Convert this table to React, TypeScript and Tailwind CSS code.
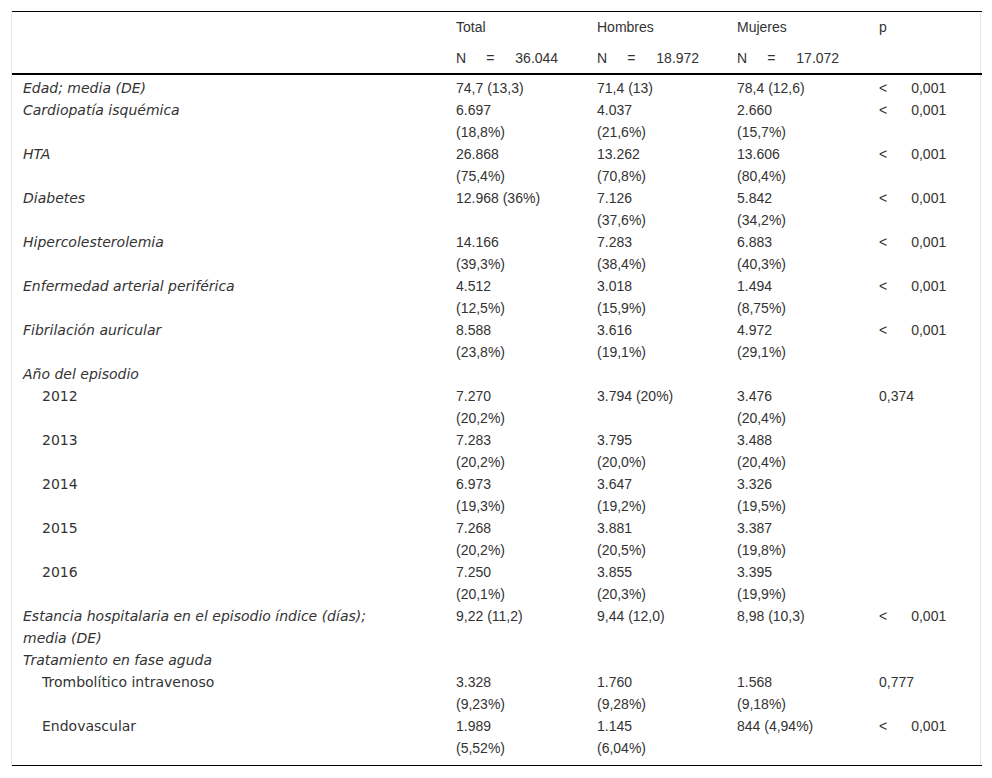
type Row = {
  label: string
  sub?: boolean
  total?: string
  hombres?: string
  mujeres?: string
  p?: string
  pLess?: boolean
}

const rows: Row[] = [
  { label: 'Edad; media (DE)', total: '74,7 (13,3)', hombres: '71,4 (13)', mujeres: '78,4 (12,6)', p: '0,001', pLess: true },
  { label: 'Cardiopatía isquémica', total: '6.697 (18,8%)', hombres: '4.037 (21,6%)', mujeres: '2.660 (15,7%)', p: '0,001', pLess: true },
  { label: 'HTA', total: '26.868 (75,4%)', hombres: '13.262 (70,8%)', mujeres: '13.606 (80,4%)', p: '0,001', pLess: true },
  { label: 'Diabetes', total: '12.968 (36%)', hombres: '7.126 (37,6%)', mujeres: '5.842 (34,2%)', p: '0,001', pLess: true },
  { label: 'Hipercolesterolemia', total: '14.166 (39,3%)', hombres: '7.283 (38,4%)', mujeres: '6.883 (40,3%)', p: '0,001', pLess: true },
  { label: 'Enfermedad arterial periférica', total: '4.512 (12,5%)', hombres: '3.018 (15,9%)', mujeres: '1.494 (8,75%)', p: '0,001', pLess: true },
  { label: 'Fibrilación auricular', total: '8.588 (23,8%)', hombres: '3.616 (19,1%)', mujeres: '4.972 (29,1%)', p: '0,001', pLess: true },
  { label: 'Año del episodio' },
  { label: '2012', sub: true, total: '7.270 (20,2%)', hombres: '3.794 (20%)', mujeres: '3.476 (20,4%)', p: '0,374' },
  { label: '2013', sub: true, total: '7.283 (20,2%)', hombres: '3.795 (20,0%)', mujeres: '3.488 (20,4%)' },
  { label: '2014', sub: true, total: '6.973 (19,3%)', hombres: '3.647 (19,2%)', mujeres: '3.326 (19,5%)' },
  { label: '2015', sub: true, total: '7.268 (20,2%)', hombres: '3.881 (20,5%)', mujeres: '3.387 (19,8%)' },
  { label: '2016', sub: true, total: '7.250 (20,1%)', hombres: '3.855 (20,3%)', mujeres: '3.395 (19,9%)' },
  { label: 'Estancia hospitalaria en el episodio índice (días); media (DE)', total: '9,22 (11,2)', hombres: '9,44 (12,0)', mujeres: '8,98 (10,3)', p: '0,001', pLess: true },
  { label: 'Tratamiento en fase aguda' },
  { label: 'Trombolítico intravenoso', sub: true, total: '3.328 (9,23%)', hombres: '1.760 (9,28%)', mujeres: '1.568 (9,18%)', p: '0,777' },
  { label: 'Endovascular', sub: true, total: '1.989 (5,52%)', hombres: '1.145 (6,04%)', mujeres: '844 (4,94%)', p: '0,001', pLess: true },
]

const labelFont = { fontFamily: '"DejaVu Sans", Verdana, sans-serif' }

function NCell({ n }: { n: string }) {
  return (
    <span className="whitespace-nowrap">
      N<span className="ml-[20px]">=</span>
      <span className="ml-[21px]">{n}</span>
    </span>
  )
}

function Num({ value }: { value?: string }) {
  return <div className="w-[86px]">{value}</div>
}

export default function App() {
  const last = rows.length - 1
  return (
    <div
      className="bg-white p-[11px] text-[14px] leading-[22px] text-[#333]"
      style={{ fontFamily: '"Liberation Sans", Arial, sans-serif' }}
    >
      <div className="border-x border-[#e8e8e8]">
        <table className="w-full table-fixed border-collapse border-y border-black">
          <colgroup>
            <col className="w-[433px]" />
            <col className="w-[141px]" />
            <col className="w-[140px]" />
            <col className="w-[142px]" />
            <col className="w-[114px]" />
          </colgroup>
          <thead>
            <tr className="text-left align-top">
              <th className="pl-[11px] pt-[4px] pb-[4px] font-normal"></th>
              <th className="pl-[11px] pt-[4px] pb-[4px] font-normal">Total</th>
              <th className="pl-[11px] pt-[4px] pb-[4px] font-normal">Hombres</th>
              <th className="pl-[11px] pt-[4px] pb-[4px] font-normal">Mujeres</th>
              <th className="pl-[11px] pt-[4px] pb-[4px] font-normal">p</th>
            </tr>
            <tr className="border-b-2 border-black text-left align-top">
              <th className="pl-[11px] pt-[5px] pb-[4px] font-normal"></th>
              <th className="pl-[11px] pt-[5px] pb-[4px] font-normal">
                <NCell n="36.044" />
              </th>
              <th className="pl-[11px] pt-[5px] pb-[4px] font-normal">
                <NCell n="18.972" />
              </th>
              <th className="pl-[11px] pt-[5px] pb-[4px] font-normal">
                <NCell n="17.072" />
              </th>
              <th className="pl-[11px] pt-[5px] pb-[4px] font-normal"></th>
            </tr>
          </thead>
          <tbody>
            {rows.map((r, i) => {
              const pad = i === 0 ? 'pt-[2px]' : i === last ? 'pb-[6px]' : ''
              return (
                <tr key={i} className="align-top">
                  <td
                    className={r.sub ? `pl-[30px] ${pad}` : `pl-[11px] italic ${pad}`}
                    style={labelFont}
                  >
                    <div className="max-w-[372px]">{r.label}</div>
                  </td>
                  <td className={`pl-[11px] ${pad}`}>
                    <Num value={r.total} />
                  </td>
                  <td className={`pl-[11px] ${pad}`}>
                    <Num value={r.hombres} />
                  </td>
                  <td className={`pl-[11px] ${pad}`}>
                    <Num value={r.mujeres} />
                  </td>
                  <td className={`whitespace-nowrap pl-[11px] ${pad}`}>
                    {r.pLess ? (
                      <>
                        &lt;<span className="ml-[24px]">{r.p}</span>
                      </>
                    ) : (
                      r.p
                    )}
                  </td>
                </tr>
              )
            })}
          </tbody>
        </table>
      </div>
    </div>
  )
}
